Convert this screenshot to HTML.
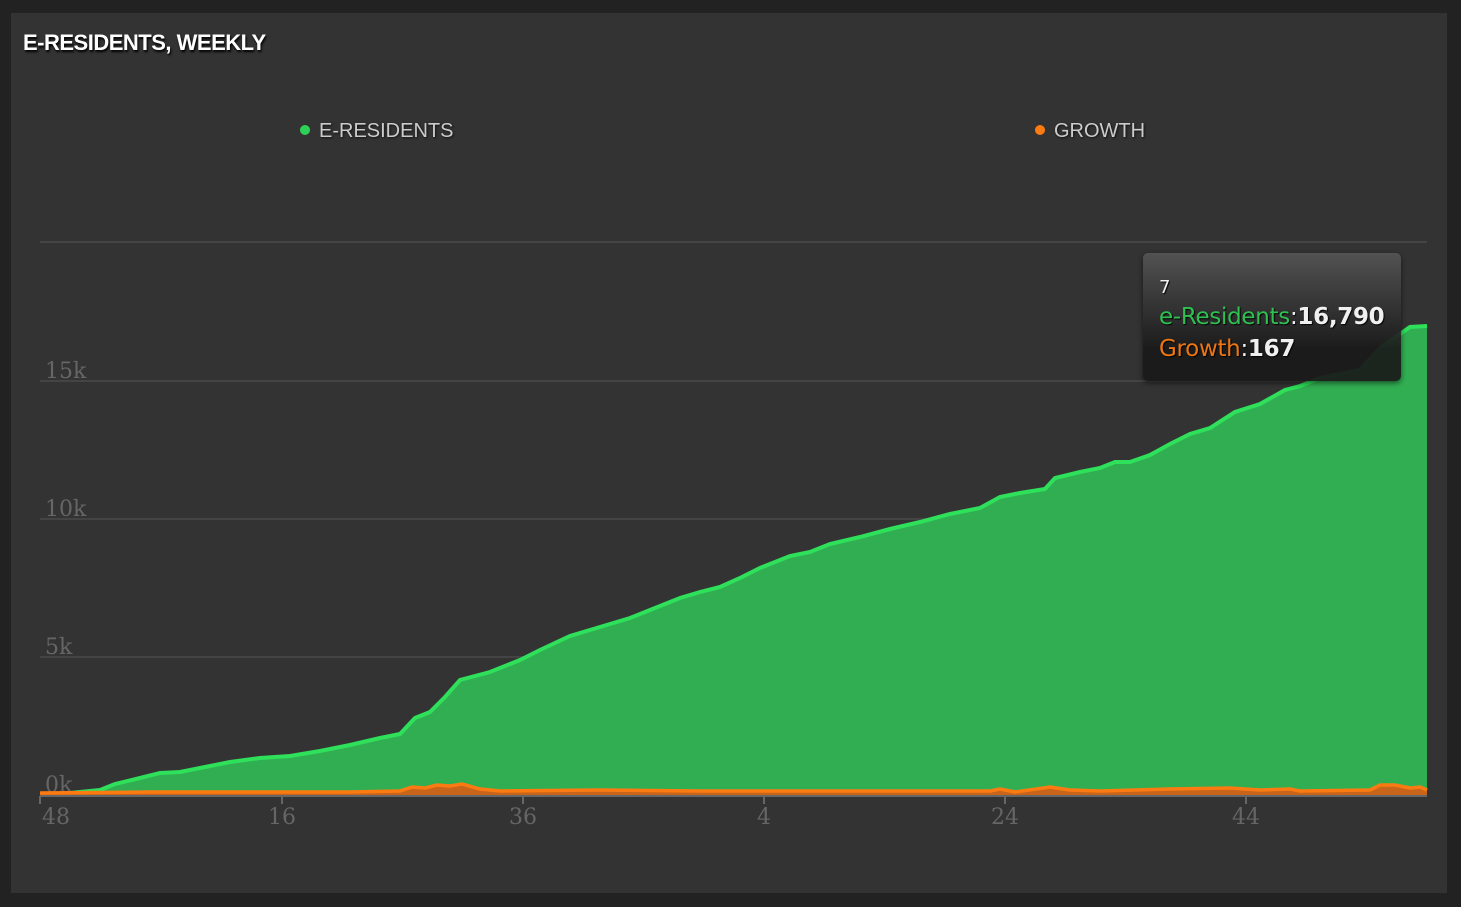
<!DOCTYPE html>
<html><head><meta charset="utf-8"><style>
html,body{margin:0;padding:0;width:1461px;height:907px;background:#222;overflow:hidden;font-family:"Liberation Sans",sans-serif}
.panel{position:absolute;left:11px;top:13px;width:1436px;height:880px;background:#333}
.title{position:absolute;left:23px;top:30px;color:#fff;font-weight:bold;font-size:22px;letter-spacing:-0.5px;text-shadow:1px 2px 2px #000}
.leg{position:absolute;top:120px;color:#ccc;font-size:20px;text-shadow:1px 1px 2px #111}
.dot{display:inline-block;width:10px;height:10px;border-radius:50%;margin-right:9px;vertical-align:2px}
.tip{position:absolute;left:1143px;top:253px;width:258px;height:128px;border-radius:5px;background:linear-gradient(#555,#1a1a1a 75%);box-shadow:0 2px 6px rgba(0,0,0,.6);font-family:"DejaVu Sans",sans-serif;color:#fff;opacity:.93}
.tip div{position:absolute;left:16px;font-size:23px;text-shadow:1px 1px 1px #000;letter-spacing:-0.3px}
</style></head><body>
<div class="panel"></div>
<div class="title">E-RESIDENTS, WEEKLY</div>
<div class="leg" style="left:300px"><span class="dot" style="background:#2ed158"></span>E-RESIDENTS</div>
<div class="leg" style="left:1035px"><span class="dot" style="background:#fb7b12"></span>GROWTH</div>
<svg width="1461" height="907" style="position:absolute;left:0;top:0">
<g stroke="#444" stroke-width="2"><line x1="40" y1="242" x2="1427" y2="242"/><line x1="40" y1="381" x2="1427" y2="381"/><line x1="40" y1="519" x2="1427" y2="519"/><line x1="40" y1="657" x2="1427" y2="657"/></g>
<g font-family="DejaVu Serif, serif" font-size="22" fill="#666"><text x="45" y="378">15k</text><text x="45" y="516">10k</text><text x="45" y="654">5k</text><text x="45" y="792">0k</text></g>
<polygon fill="#31ae52" points="40,795 70,793 100,790 115,784 140,778 160,773 180,772 200,768 230,762 260,758 290,756 320,751 350,745 380,738 400,734 415,718 430,712 445,697 460,680 490,672 520,660 540,650 570,636 600,627 630,618 650,610 680,598 700,592 720,587 740,578 760,568 790,556 810,552 830,544 860,537 890,529 920,522 950,514 980,508 1000,497 1020,493 1045,489 1055,478 1080,472 1100,468 1115,462 1130,462 1150,455 1170,444 1190,434 1210,428 1235,412 1260,404 1285,390 1300,386 1320,378 1360,370 1380,348 1410,327 1427,326 1427,795"/>
<polyline fill="none" stroke="#2ee05a" stroke-width="4" points="40,795 70,793 100,790 115,784 140,778 160,773 180,772 200,768 230,762 260,758 290,756 320,751 350,745 380,738 400,734 415,718 430,712 445,697 460,680 490,672 520,660 540,650 570,636 600,627 630,618 650,610 680,598 700,592 720,587 740,578 760,568 790,556 810,552 830,544 860,537 890,529 920,522 950,514 980,508 1000,497 1020,493 1045,489 1055,478 1080,472 1100,468 1115,462 1130,462 1150,455 1170,444 1190,434 1210,428 1235,412 1260,404 1285,390 1300,386 1320,378 1360,370 1380,348 1410,327 1427,326"/>
<polygon fill="#c8651a" points="40,795 40,793 150,792 350,792 400,791 412,787 425,788 437,785 450,786 462,784 480,789 500,791 600,790 700,791 990,791 1000,789 1015,792 1050,787 1070,790 1100,791 1170,789 1230,788 1260,790 1290,789 1300,791 1370,790 1380,785 1395,785 1410,788 1420,787 1427,790 1427,795"/>
<polyline fill="none" stroke="#fb7b12" stroke-width="3.5" points="40,793 150,792 350,792 400,791 412,787 425,788 437,785 450,786 462,784 480,789 500,791 600,790 700,791 990,791 1000,789 1015,792 1050,787 1070,790 1100,791 1170,789 1230,788 1260,790 1290,789 1300,791 1370,790 1380,785 1395,785 1410,788 1420,787 1427,790"/>
<line x1="40" y1="796" x2="1427" y2="796" stroke="#666" stroke-width="2"/>
<g stroke="#666" stroke-width="2"><line x1="40" y1="796" x2="40" y2="804"/><line x1="282" y1="796" x2="282" y2="804"/><line x1="523" y1="796" x2="523" y2="804"/><line x1="764" y1="796" x2="764" y2="804"/><line x1="1005" y1="796" x2="1005" y2="804"/><line x1="1246" y1="796" x2="1246" y2="804"/></g>
<g font-family="DejaVu Serif, serif" font-size="22" fill="#666"><text x="42" y="824">48</text><text x="268" y="824">16</text><text x="509" y="824">36</text><text x="757" y="824">4</text><text x="991" y="824">24</text><text x="1232" y="824">44</text></g>
</svg>
<div class="tip">
<div style="top:24px;font-size:18px">7</div>
<div style="top:51px"><span style="color:#2ecc55">e-Residents</span>:<b>16,790</b></div>
<div style="top:83px"><span style="color:#fb7b12">Growth</span>:<b>167</b></div>
</div>
</body></html>
